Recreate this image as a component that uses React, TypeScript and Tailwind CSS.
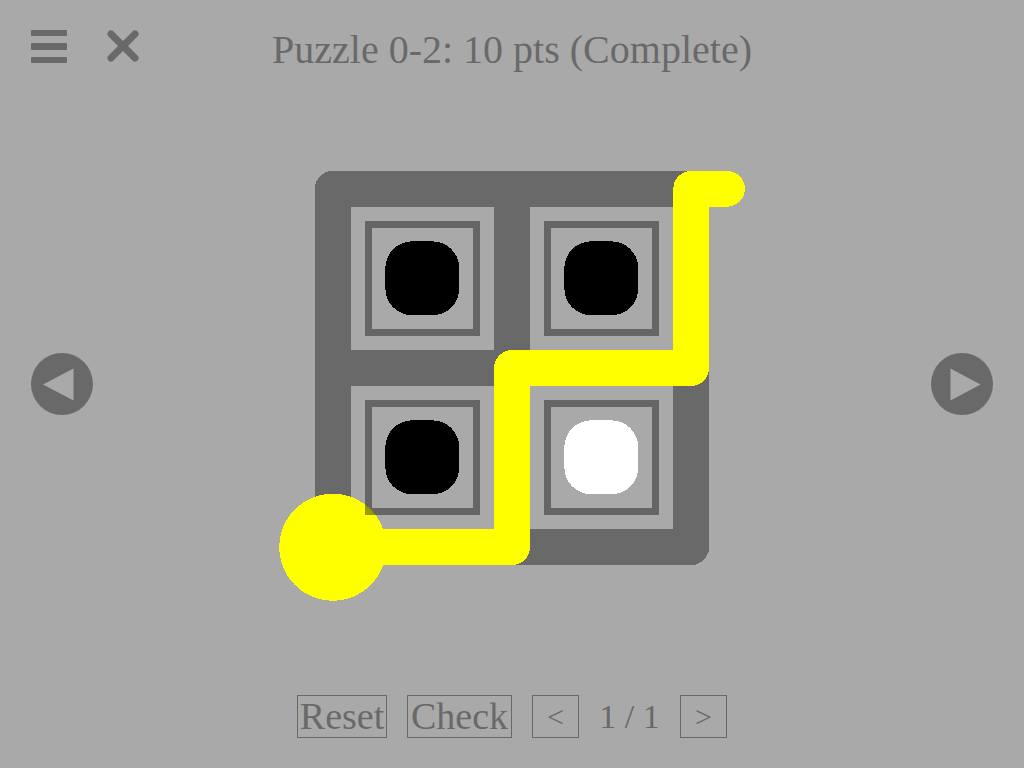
const LINE = 35.8;

const cells = [
  { x: 86, y: 54, color: "black" },
  { x: 265, y: 54, color: "black" },
  { x: 86, y: 233, color: "black" },
  { x: 265, y: 233, color: "white" },
];

function PuzzleBoard() {
  return (
    <svg
      viewBox="0 0 466 434"
      className="w-full max-w-[466px]"
      shapeRendering="crispEdges"
      role="img"
      aria-label="Puzzle board"
    >
      {/* grid */}
      <path
        d="M53.8 21.8H412.2V380.2H53.8ZM233 21.8V380.2M53.8 201H412.2"
        fill="none"
        stroke="#696969"
        strokeWidth={LINE}
        strokeLinejoin="round"
      />

      {/* traced line */}
      <circle cx="53.8" cy="380.2" r="53.5" fill="#ffff00" />
      <path
        d="M53.8 380.2H233V201H412.2V21.8H448"
        fill="none"
        stroke="#ffff00"
        strokeWidth={LINE}
        strokeLinecap="round"
        strokeLinejoin="round"
      />

      {/* symbols sit above the line */}
      {cells.map(({ x, y, color }) => (
        <g key={`${x}-${y}`}>
          <rect
            x={x + 3.5}
            y={y + 3.5}
            width="108"
            height="108"
            fill="none"
            stroke="#000000"
            strokeOpacity="0.4"
            strokeWidth="7"
          />
          <rect x={x + 20.3} y={y + 20.3} width="74" height="74" rx="27" fill={color} />
        </g>
      ))}
    </svg>
  );
}

function ArrowButton({ label, points }: { label: string; points: string }) {
  return (
    <button type="button" aria-label={label} className="size-[62px] shrink-0">
      <svg viewBox="0 0 62 62" className="size-full">
        <circle cx="31" cy="31" r="31" fill="#696969" />
        <polygon points={points} fill="#a9a9a9" />
      </svg>
    </button>
  );
}

export default function App() {
  return (
    <div className="flex min-h-screen flex-col bg-[#a9a9a9] font-['Liberation_Serif',serif] text-[#696969]">
      <header className="grid h-[73px] grid-cols-[1fr_auto_1fr] items-end px-[31px]">
        <div className="flex items-center gap-10 pb-2">
          <button type="button" aria-label="Menu">
            <svg viewBox="0 0 36 36" className="size-9" fill="#696969">
              <rect x="0" y="1" width="36" height="6" rx="1" />
              <rect x="0" y="14" width="36" height="7" rx="1" />
              <rect x="0" y="28" width="36" height="6" rx="1" />
            </svg>
          </button>
          <button type="button" aria-label="Close">
            <svg viewBox="0 0 32 36" className="h-9 w-8">
              <path
                d="M4 5L28 29M28 5L4 29"
                stroke="#696969"
                strokeWidth="7"
                strokeLinecap="round"
              />
            </svg>
          </button>
        </div>
        <h1 className="text-[40px] leading-[46px]">Puzzle 0-2: 10 pts (Complete)</h1>
      </header>

      <main className="flex flex-1 items-center justify-between px-[31px]">
        <ArrowButton label="Previous puzzle" points="12,31.5 42.5,15.5 42.5,47.5" />
        <PuzzleBoard />
        <ArrowButton label="Next puzzle" points="49.5,31.5 19.5,15.5 19.5,47.5" />
      </main>

      <footer className="flex items-center justify-center gap-5 pb-[30px] text-[38px] leading-[41px]">
        <button type="button" className="w-[90px] border border-[#696969]">
          Reset
        </button>
        <button type="button" className="w-[105px] border border-[#696969]">
          Check
        </button>
        <button
          type="button"
          aria-label="Previous solution"
          className="w-[47px] border border-[#696969] text-[30px]"
        >
          &lt;
        </button>
        <span className="w-[61px] text-center text-[34px] whitespace-nowrap">1 / 1</span>
        <button
          type="button"
          aria-label="Next solution"
          className="w-[47px] border border-[#696969] text-[30px]"
        >
          &gt;
        </button>
      </footer>
    </div>
  );
}
